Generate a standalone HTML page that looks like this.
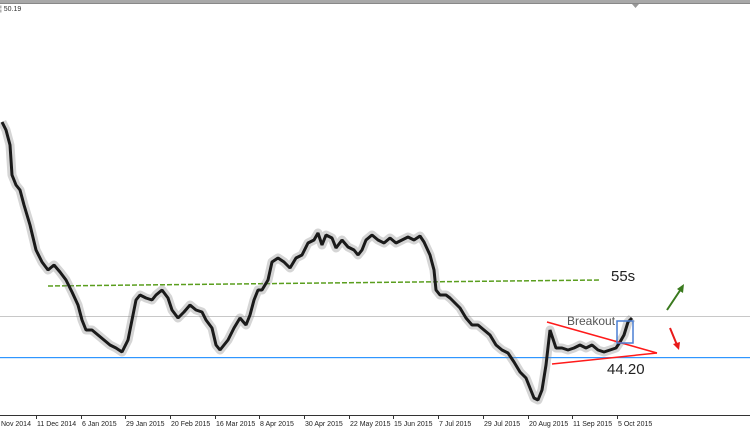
<!DOCTYPE html>
<html><head><style>
body{margin:0;width:750px;height:430px;overflow:hidden;background:#fff;font-family:"Liberation Sans",sans-serif;}
</style></head><body>
<svg width="750" height="430" xmlns="http://www.w3.org/2000/svg">
<defs>
<polyline id="p" points="2,122 6,130 10,145 12,175 16,185 20,190 24,205 30,225 36,250 42,262 48,270 54,265 60,272 66,280 72,292 78,305 82,320 86,330 92,330 98,335 104,340 110,345 116,348 122,352 128,340 132,320 136,300 140,295 146,298 152,300 156,295 162,290 168,298 172,310 178,318 184,312 190,305 196,310 202,312 206,320 212,328 216,345 220,350 224,345 228,340 234,328 240,318 246,325 250,315 254,300 258,290 262,290 268,280 272,262 278,258 284,262 290,268 296,258 302,255 308,243 314,240 318,233 322,245 326,235 332,238 336,248 342,240 348,247 354,250 358,255 362,250 366,240 372,235 378,240 384,243 390,238 396,243 402,240 408,237 414,240 420,236 424,242 430,255 434,270 436,290 440,295 446,295 450,298 454,302 460,308 466,318 472,325 478,325 484,330 490,335 496,345 502,350 508,353 514,362 520,372 526,378 530,388 534,398 538,400 542,390 546,365 550,330 556,348 562,348 568,350 574,348 580,345 586,348 592,345 598,350 604,352 610,350 616,348 620,342 624,335 628,322 632,318"/>
</defs>
<rect x="0" y="0" width="750" height="3" fill="#a8a8a8"/>
<rect x="0" y="3" width="750" height="1" fill="#888"/>
<polygon points="632,4 639,4 635.5,8" fill="#999"/>
<text x="0" y="11" font-size="7" fill="#333">¦ 50.19</text>
<line x1="0" y1="316.5" x2="750" y2="316.5" stroke="#c8c8c8"/>
<rect x="0" y="357" width="750" height="1.2" fill="#2f96ff"/>
<line x1="48" y1="286" x2="600" y2="280" stroke="#5a9e1e" stroke-width="1.5" stroke-dasharray="5,2"/>
<use href="#p" fill="none" stroke="#888" stroke-opacity="0.35" stroke-width="9" stroke-linejoin="round"/>
<use href="#p" fill="none" stroke="#1a1a1a" stroke-width="3" stroke-linejoin="bevel"/>
<line x1="547" y1="322" x2="657" y2="353" stroke="#ff1a1a" stroke-width="1.5"/>
<line x1="552" y1="364" x2="657" y2="353" stroke="#ff1a1a" stroke-width="1.5"/>
<rect x="617" y="321" width="16" height="22" fill="none" stroke="#4a7fd4" stroke-width="1.5"/>
<text x="567" y="325" font-size="12" fill="#555">Breakout</text>
<text x="611" y="281" font-size="15" fill="#222">55s</text>
<text x="607" y="374" font-size="15" fill="#222">44.20</text>
<line x1="667" y1="310" x2="681" y2="289" stroke="#3a7a1e" stroke-width="2"/>
<polygon points="684,284 683,293 677,289" fill="#3a7a1e"/>
<line x1="670" y1="328" x2="677" y2="345" stroke="#e81a1a" stroke-width="2"/>
<polygon points="679,350 673,344 680,342" fill="#e81a1a"/>
<line x1="0" y1="415.5" x2="750" y2="415.5" stroke="#333"/>
<g font-size="7" fill="#222">
<text x="1" y="426">Nov 2014</text><text x="37" y="426">11 Dec 2014</text><text x="82" y="426">6 Jan 2015</text>
<text x="126" y="426">29 Jan 2015</text><text x="171" y="426">20 Feb 2015</text><text x="216" y="426">16 Mar 2015</text>
<text x="260" y="426">8 Apr 2015</text><text x="305" y="426">30 Apr 2015</text><text x="350" y="426">22 May 2015</text>
<text x="394" y="426">15 Jun 2015</text><text x="439" y="426">7 Jul 2015</text><text x="484" y="426">29 Jul 2015</text>
<text x="529" y="426">20 Aug 2015</text><text x="573" y="426">11 Sep 2015</text><text x="618" y="426">5 Oct 2015</text>
</g>
<g stroke="#333">
<line x1="36.5" y1="415" x2="36.5" y2="419"/><line x1="81.5" y1="415" x2="81.5" y2="419"/><line x1="125.5" y1="415" x2="125.5" y2="419"/><line x1="170.5" y1="415" x2="170.5" y2="419"/><line x1="215.5" y1="415" x2="215.5" y2="419"/><line x1="259.5" y1="415" x2="259.5" y2="419"/><line x1="304.5" y1="415" x2="304.5" y2="419"/><line x1="349.5" y1="415" x2="349.5" y2="419"/><line x1="393.5" y1="415" x2="393.5" y2="419"/><line x1="438.5" y1="415" x2="438.5" y2="419"/><line x1="483.5" y1="415" x2="483.5" y2="419"/><line x1="528.5" y1="415" x2="528.5" y2="419"/><line x1="572.5" y1="415" x2="572.5" y2="419"/><line x1="617.5" y1="415" x2="617.5" y2="419"/>
</g>
</svg>
</body></html>
